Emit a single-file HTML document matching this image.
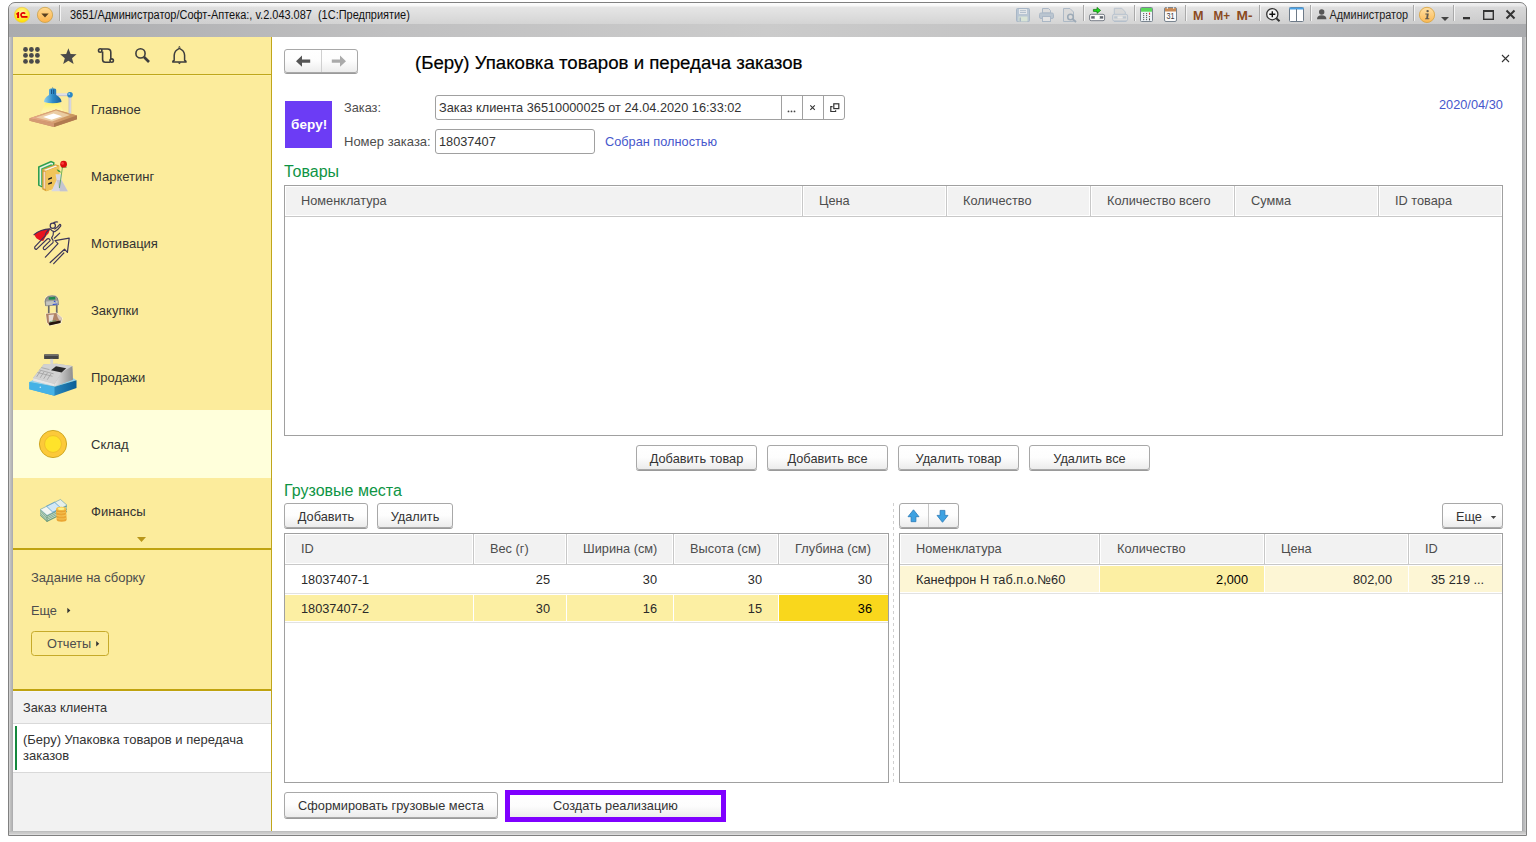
<!DOCTYPE html>
<html><head><meta charset="utf-8">
<style>
*{box-sizing:border-box;margin:0;padding:0}
html,body{width:1536px;height:842px;overflow:hidden;background:#fff}
body{position:relative;font-family:"Liberation Sans",sans-serif;font-size:12.75px;color:#333}
.a{position:absolute}
.t{position:absolute;white-space:nowrap;line-height:15px}
#frame{left:8px;top:2px;width:1519px;height:834px;border:1px solid #808080;border-radius:7px 7px 0 0;
 background:linear-gradient(to right,#d0d0d0 0,#d0d0d0 1px,#c0c0c0 1px,#c0c0c0 2px,#b8b8b8 2px,#b8b8b8 3px,#aeaeb0 3px,#aeaeb0 1513px,#a8a9ac 1513px,#a8a9ac 1514px,#b6b7b9 1514px,#b6b7b9 1515px,#bbbcbe 1515px,#bbbcbe 1516px,#cacaca 1516px)}
#tb1{left:9px;top:3px;width:1517px;height:21px;border-radius:6px 6px 0 0;background:linear-gradient(to right,rgba(120,120,125,0.12) 0,rgba(120,120,125,0) 25%,rgba(120,120,125,0) 75%,rgba(120,120,125,0.12) 100%),linear-gradient(#fdfdfd 0,#f8f8f8 3px,#e6e6e6 4px,#d4d4d4 21px)}
#tb2{left:9px;top:24px;width:1517px;height:13px;background:linear-gradient(to right,#aaabae 0,#c0c0c1 25%,#cbcbcb 50%,#c0c0c1 75%,#aaabae 100%)}
#bot{left:9px;top:831px;width:1517px;height:4px;background:linear-gradient(#bdbebe 0,#bdbebe 1px,#c8c8c8 1px,#c8c8c8 2px,#cdcdcd 2px,#cdcdcd 3px,#dcdcdc 3px)}
#side{left:13px;top:37px;width:259px;height:794px;background:#fcec9c;border-right:1px solid #bfa71b}
#main{left:272px;top:37px;width:1250px;height:794px;background:#fff}
.sec{position:absolute;left:0;width:258px;height:67px}
.sec .t{left:78px;top:26px;color:#333}
.sl{font-size:13px}
.btn{position:absolute;border:1px solid #a8a8a8;border-radius:3px;background:linear-gradient(#ffffff 0,#fdfdfd 50%,#ececec 100%);box-shadow:0 1px 0 #9a9a9a;color:#333;text-align:center;white-space:nowrap;line-height:25px}
.hdr{position:absolute;background:#f2f2f2;border-top:1px solid #fff;border-bottom:1px solid #fff}
.tbl{position:absolute;border:1px solid #a0a0a0;background:#fff}
.vl{position:absolute;width:1px;background:#d6d6d6}
.hl{position:absolute;height:1px;background:#d6d6d6}
</style></head><body>
<div id="frame" class="a"></div>
<div id="tb1" class="a"></div>
<div id="tb2" class="a"></div>
<div id="bot" class="a"></div>


<!-- TITLE BAR -->
<svg class="a" style="left:0;top:0" width="1536" height="37">
 <defs>
  <radialGradient id="g1c" cx="0.5" cy="0.35" r="0.6"><stop offset="0" stop-color="#fff7a8"/><stop offset="1" stop-color="#ffe100"/></radialGradient>
  <linearGradient id="gdd" x1="0" y1="0" x2="0" y2="1"><stop offset="0" stop-color="#ffdb94"/><stop offset="1" stop-color="#fdb24a"/></linearGradient>
  <linearGradient id="ginfo" x1="0" y1="0" x2="0" y2="1"><stop offset="0" stop-color="#ffe1a6"/><stop offset="1" stop-color="#fbb955"/></linearGradient>
 </defs>
 <circle cx="22" cy="14.9" r="7.6" fill="url(#g1c)" stroke="#e8c85a" stroke-width="0.8"/>
 <path d="M16 13.7 L18.1 12.1 L19.1 12.1 L19.1 17.9 L17.1 17.9 L17.1 14.4 L16.4 14.8 Z" fill="#e20000"/>
 <path d="M25.1 13.7 A2.25 2.1 0 1 0 22.3 16.8" fill="none" stroke="#e20000" stroke-width="1.7"/>
 <rect x="21.4" y="16" width="6.1" height="1.8" fill="#e20000"/>
 <circle cx="45" cy="14.9" r="7.6" fill="url(#gdd)" stroke="#c9a14a" stroke-width="0.8"/>
 <path d="M41.3 13.4 L48.7 13.4 L45 17.4 Z" fill="#5a4020"/>
 <rect x="59" y="5" width="1" height="16" fill="#a9a9a9"/>
 <rect x="60" y="5" width="1" height="16" fill="#f4f4f4"/>
 <!-- right icons -->
 <g opacity="0.85">
  <rect x="1016.5" y="8.5" width="13" height="13" rx="1" fill="#b3c2d2" stroke="#9fb0c2"/>
  <rect x="1019" y="9" width="8" height="5" fill="#e6e9ec"/>
  <rect x="1020" y="10.3" width="6" height="0.8" fill="#9fb0c2"/><rect x="1020" y="12.2" width="6" height="0.8" fill="#9fb0c2"/>
  <rect x="1018.5" y="16.5" width="9" height="5" fill="#d9e6d6"/>
  <rect x="1019.5" y="17.5" width="1.5" height="4" fill="#9fb0c2"/>
 </g>
 <g opacity="0.9">
  <path d="M1042.5 8.5 L1048.5 8.5 L1050.5 10.5 L1050.5 13 L1042.5 13 Z" fill="#dcdcdc" stroke="#a6b4c4"/>
  <rect x="1039.5" y="13" width="14" height="5.5" rx="1.5" fill="#b7c3cf" stroke="#a6b4c4"/>
  <rect x="1042.5" y="16.5" width="8" height="5" fill="#e4e4e4" stroke="#a6b4c4"/>
 </g>
 <g opacity="0.9">
  <path d="M1063.5 8.5 L1070 8.5 L1073.5 12 L1073.5 21.5 L1063.5 21.5 Z" fill="#dadada" stroke="#a9b6c4"/>
  <circle cx="1070.5" cy="17" r="2.8" fill="#dcdcdc" stroke="#97a6b4" stroke-width="1.6"/>
  <path d="M1072.5 19 L1076 22" stroke="#97a6b4" stroke-width="2"/>
 </g>
 <rect x="1083" y="5" width="1" height="16" fill="#a9a9a9"/><rect x="1084" y="5" width="1" height="16" fill="#f4f4f4"/>
 <g>
  <path d="M1093.4 9.4 L1097 9.4 L1097 7.4 L1100.6 10.4 L1097 13.4 L1097 11.4 L1093.4 11.4 Z" fill="#1fe01f" stroke="#0b6b0b" stroke-width="0.7" stroke-linejoin="round"/>
  <rect x="1089.6" y="14.3" width="15" height="6.4" rx="1.6" fill="#fafafa" stroke="#6b727c" stroke-width="0.9"/>
  <rect x="1091.2" y="16.2" width="3.6" height="2.4" fill="#5e646c"/>
  <rect x="1099.6" y="16.2" width="3.6" height="2.4" fill="#5e646c"/>
  <rect x="1094.8" y="16.6" width="4.8" height="1.4" fill="#fff"/>
 </g>
 <g opacity="0.75">
  <path d="M1114.3 8.3 L1121.8 8.3 L1125.3 12 L1125.3 14.5 L1114.3 14.5 Z" fill="#d6d6d6" stroke="#a9b8c8" stroke-width="0.9"/>
  <rect x="1112.6" y="14.3" width="15" height="6.6" rx="1.6" fill="#dcdcdc" stroke="#a9b8c8" stroke-width="0.9"/>
  <rect x="1114.2" y="16.3" width="3.4" height="2.2" fill="#b3c0cc"/>
  <rect x="1122.6" y="16.3" width="3.4" height="2.2" fill="#b3c0cc"/>
  <rect x="1117.6" y="16.7" width="5" height="1.3" fill="#eee"/>
  <rect x="1114" y="21" width="12.4" height="1" fill="#a9b8c8"/>
 </g>
 <rect x="1134" y="5" width="1" height="16" fill="#a9a9a9"/><rect x="1135" y="5" width="1" height="16" fill="#f4f4f4"/>
 <g>
  <rect x="1140.5" y="7.5" width="12" height="14" rx="1" fill="#eef3f7" stroke="#7a8590"/>
  <rect x="1141" y="8" width="11" height="3.7" fill="#5bd85b"/>
  <g fill="#444"><circle cx="1143.7" cy="13.6" r="0.6"/><circle cx="1146.6" cy="13.6" r="0.6"/><circle cx="1143.7" cy="15.6" r="0.6"/><circle cx="1146.6" cy="15.6" r="0.6"/><circle cx="1143.7" cy="17.6" r="0.6"/><circle cx="1146.6" cy="17.6" r="0.6"/><circle cx="1143.7" cy="19.6" r="0.6"/><circle cx="1146.6" cy="19.6" r="0.6"/><circle cx="1149.5" cy="16.6" r="0.6"/><rect x="1149" y="18.4" width="1" height="2"/></g>
  <rect x="1149" y="12.6" width="1.1" height="2.2" rx="0.4" fill="#f03030"/>
 </g>
 <g>
  <rect x="1164.5" y="7.5" width="12" height="14" rx="1.5" fill="#fafafa" stroke="#7a8590"/>
  <rect x="1165" y="8" width="11" height="3.5" fill="#c98a55"/>
  <rect x="1166.8" y="6.8" width="1" height="2.2" fill="#eee"/><rect x="1173.2" y="6.8" width="1" height="2.2" fill="#eee"/>
  <text x="1166.4" y="19.4" font-family="Liberation Sans" font-size="8.8" fill="#3a3a3a" textLength="8" lengthAdjust="spacingAndGlyphs">31</text>
 </g>
 <rect x="1185" y="5" width="1" height="16" fill="#a9a9a9"/><rect x="1186" y="5" width="1" height="16" fill="#f4f4f4"/>
 <g font-family="Liberation Sans" font-weight="bold" fill="#8b4b1f" font-size="13.5">
  <text x="1193" y="20.1" textLength="10.5" lengthAdjust="spacingAndGlyphs">M</text>
  <text x="1213.5" y="20.1" textLength="16.5" lengthAdjust="spacingAndGlyphs">M+</text>
  <text x="1236.5" y="20.1" textLength="16" lengthAdjust="spacingAndGlyphs">M-</text>
 </g>
 <rect x="1259" y="5" width="1" height="16" fill="#a9a9a9"/><rect x="1260" y="5" width="1" height="16" fill="#f4f4f4"/>
 <g>
  <circle cx="1272.3" cy="14.2" r="5.6" fill="#f4f4f4" stroke="#333" stroke-width="1.3"/>
  <path d="M1269.3 14.2 H1275.3 M1272.3 11.2 V17.2" stroke="#111" stroke-width="1.4"/>
  <path d="M1276.3 18.2 L1279.5 21.3" stroke="#333" stroke-width="2"/>
 </g>
 <g>
  <rect x="1289.5" y="7.5" width="14" height="14" rx="1" fill="#fff" stroke="#6d7a88"/>
  <rect x="1289.5" y="7.5" width="14" height="2" fill="#4aa3e8"/>
  <rect x="1296" y="9" width="1" height="12" fill="#6d7a88"/>
 </g>
 <rect x="1310" y="5" width="1" height="16" fill="#a9a9a9"/><rect x="1311" y="5" width="1" height="16" fill="#f4f4f4"/>
 <g fill="#555">
  <circle cx="1321.7" cy="12" r="2.7"/>
  <path d="M1317 19.2 Q1317 15.2 1321.7 15.2 Q1326.4 15.2 1326.4 19.2 Z"/>
 </g>
 <text x="1329.5" y="19.3" font-family="Liberation Sans" font-size="12" fill="#222" textLength="78.5" lengthAdjust="spacingAndGlyphs">Администратор</text>
 <rect x="1413" y="5" width="1" height="16" fill="#a9a9a9"/><rect x="1414" y="5" width="1" height="16" fill="#f4f4f4"/>
 <circle cx="1427" cy="14.9" r="7.6" fill="url(#ginfo)" stroke="#d9a646" stroke-width="0.9"/>
 <circle cx="1427.6" cy="11.1" r="1.2" fill="#5f5a50"/>
 <path d="M1425.4 13.4 L1428.8 13.4 L1428 18.2 L1429.4 18.2 L1429.2 19.2 L1425 19.2 L1425.2 18.2 L1426.2 18.2 L1426.7 14.4 L1425.2 14.4 Z" fill="#5f5a50"/>
 <path d="M1441 17 L1449 17 L1445 21 Z" fill="#444"/>
 <rect x="1453" y="5" width="1" height="16" fill="#a9a9a9"/><rect x="1454" y="5" width="1" height="16" fill="#f4f4f4"/>
 <rect x="1463" y="17" width="7" height="2.3" fill="#333"/>
 <rect x="1483.7" y="10.7" width="9.6" height="8.6" fill="none" stroke="#333" stroke-width="1.4"/>
 <rect x="1483" y="10" width="11" height="2" fill="#333"/>
 <path d="M1506.5 10.5 L1514.5 18.5 M1514.5 10.5 L1506.5 18.5" stroke="#333" stroke-width="2"/>
</svg>
<div class="t" style="left:70px;top:8px;font-size:12px;line-height:14px;color:#111;transform:scaleX(0.913);transform-origin:0 0">3651/Администратор/Софт-Аптека:, v.2.043.087&nbsp; (1С:Предприятие)</div>

<!-- SIDEBAR -->
<div id="side" class="a"></div>
<svg class="a" style="left:0;top:0" width="272" height="842">
 <defs>
  <linearGradient id="shade" x1="0" y1="0" x2="1" y2="0"><stop offset="0" stop-color="#8fd0ef"/><stop offset="0.5" stop-color="#2f8cc8"/><stop offset="1" stop-color="#1a5f99"/></linearGradient>
  <linearGradient id="cone" x1="0" y1="0" x2="0" y2="1"><stop offset="0" stop-color="#fff36a"/><stop offset="1" stop-color="#fff7c0" stop-opacity="0.6"/></linearGradient>
  <linearGradient id="wood" x1="0" y1="0" x2="1" y2="0"><stop offset="0" stop-color="#e6a98a"/><stop offset="1" stop-color="#c8955a"/></linearGradient>
  <linearGradient id="drawer" x1="0" y1="0" x2="1" y2="0"><stop offset="0" stop-color="#4cb8ec"/><stop offset="1" stop-color="#0b5e96"/></linearGradient>
  <linearGradient id="reg" x1="0" y1="0" x2="1" y2="0"><stop offset="0" stop-color="#e4e4e4"/><stop offset="1" stop-color="#8d8d8d"/></linearGradient>
 </defs>
 <!-- toolbar line -->
 <rect x="13" y="74" width="258" height="1" fill="#bfa71b"/>
 <rect x="13" y="75" width="258" height="1" fill="#fdf0a8"/>
 <!-- toolbar icons -->
 <g fill="#4a4a4a">
  <circle cx="25.5" cy="49.5" r="2.4"/><circle cx="31.4" cy="49.5" r="2.4"/><circle cx="37.4" cy="49.5" r="2.4"/>
  <circle cx="25.5" cy="55.4" r="2.4"/><circle cx="31.4" cy="55.4" r="2.4"/><circle cx="37.4" cy="55.4" r="2.4"/>
  <circle cx="25.5" cy="61.4" r="2.4"/><circle cx="31.4" cy="61.4" r="2.4"/><circle cx="37.4" cy="61.4" r="2.4"/>
  <path d="M68.4 48.3 L70.6 53.9 L76.6 54.3 L72 58.2 L73.6 63.9 L68.4 60.7 L63.2 63.9 L64.8 58.2 L60.2 54.3 L66.2 53.9 Z"/>
 </g>
 <g fill="none" stroke="#3d3d3d" stroke-width="1.6">
  <path d="M101.4 49 H107.5 Q110.8 49 110.8 52.3 V59.5"/>
  <path d="M102.6 51.5 V59.6 Q102.6 62.3 105.3 62.3 H110.3"/>
  <circle cx="100.2" cy="50.5" r="1.7"/>
  <circle cx="111.7" cy="60.6" r="1.7"/>
  <circle cx="140.5" cy="53.4" r="4.6"/>
 </g>
 <path d="M144 57 L149 62" stroke="#3d3d3d" stroke-width="2.6"/>
 <path d="M179.4 48.4 Q174.4 50.6 174.2 55.4 V60.2 Q172.7 60.8 172.7 62 H186.1 Q186.1 60.8 184.6 60.2 V55.4 Q184.4 50.6 179.4 48.4 Z" fill="none" stroke="#3d3d3d" stroke-width="1.5" stroke-linejoin="round"/>
 <path d="M177.9 47.6 L180.9 47.6 L179.4 46 Z" fill="#3d3d3d"/>
 <path d="M177.6 62.6 L181.2 62.6 L179.4 64.3 Z" fill="#3d3d3d"/>

 <!-- highlighted section -->
 <rect x="13" y="410" width="258" height="68" fill="#ffffdb"/>

 <!-- Главное lamp -->
 <path d="M45.5 103 L59.5 103 L64 112.5 L41 112.5 Z" fill="url(#cone)"/>
 <path d="M29.5 118.2 L56 109.4 L77 115.4 L77 119.2 L54 127 L29.5 120.8 Z" fill="#c99060"/>
 <path d="M29.5 118.2 L56 109.4 L77 115.4 L54 123.6 Z" fill="url(#wood)"/>
 <path d="M36 117.4 L56 110.6 L70 115 L52 121.6 Z" fill="#f0d8b0" opacity="0.8"/>
 <path d="M43 117 L53.5 113.4 L62 116.2 L51.6 119.8 Z" fill="#ffffff"/>
 <path d="M29.5 118.2 L54 123.6 L54 127 L29.5 120.8 Z" fill="#d49a74"/>
 <path d="M54 123.6 L77 115.4 L77 119.2 L54 127 Z" fill="#b07a50"/>
 <rect x="68.6" y="96" width="2.6" height="17.4" fill="#bcbcc8"/>
 <rect x="69.6" y="96" width="1" height="17.4" fill="#e8e8f0"/>
 <rect x="56" y="93.4" width="13" height="2.8" fill="#c8c8d4"/>
 <rect x="56" y="93.6" width="13" height="1" fill="#eeeef4"/>
 <circle cx="70" cy="94.8" r="2.8" fill="#2a86c4"/>
 <circle cx="69.2" cy="94" r="1" fill="#8fcaf0"/>
 <path d="M49 90 Q49 88.2 52.8 88.2 Q56.2 88.2 56.2 90 L56.2 95 Q61.5 97.8 61.5 102 Q52.5 104.6 44 102 Q44 97.8 49 95 Z" fill="url(#shade)"/>
 <rect x="51" y="89.5" width="0.9" height="4.5" fill="#1a4f80"/>
 <rect x="53.2" y="89.5" width="0.9" height="4.5" fill="#1a4f80"/>
 <path d="M52.4 88.2 L52.8 86.8 L53.2 88.2 Z" fill="#1a5f99"/>

 <!-- Маркетинг -->
 <path d="M38 166.5 L51 160.8 L54.5 162.2 L54.5 182.5 L42 187.5 L38 185.5 Z" fill="#2f9e4f"/>
 <path d="M39.6 167.4 L51 162.4 L53 163.2 L53 181.5 L42 186 L39.6 185 Z" fill="#e9f3e6"/>
 <path d="M41.2 168.4 L51 164.2 L53 164.8 L53 181.5 L42.6 186 L41.2 185.4 Z" fill="#3dae5c"/>
 <path d="M42.2 169.2 L55.5 164.2 L59.2 165.5 L59.2 186.5 L46 191.2 L42.2 189.2 Z" fill="#d9a23a"/>
 <path d="M43.4 170 L55.5 165.5 L57.6 166.3 L46 170.8 Z" fill="#f6f2e6"/>
 <path d="M46 171 L59.2 166 L59.2 186.5 L46 191.2 Z" fill="#f0c45a"/>
 <path d="M43.6 172 L45.4 171.4 L45.4 189 L43.6 188.2 Z" fill="#f4d8c0"/>
 <path d="M48.2 178.4 L52 177 L52 178.6 L48.2 180 Z M48.2 183.2 L52 181.8 L52 183.4 L48.2 184.8 Z" fill="#222"/>
 <path d="M55.5 174.2 L61.8 174.2 L61.4 180 L67.8 191.2 L51.4 191.2 L56.6 180 Z" fill="#d8d8e2"/>
 <path d="M56.6 180 L61.4 180 L67.8 191.2 L60 191.2 Z" fill="#c4c4d0"/>
 <path d="M62.5 167 L59.4 188" stroke="#3a9a3a" stroke-width="0.7"/>
 <path d="M56.6 169.2 Q59.6 169.6 61.2 172.4 Q58.2 172.4 56.6 169.2 Z" fill="#2f9a3a"/>
 <path d="M61.6 167.6 Q64 166.6 66.6 167.2" stroke="#2f9a3a" stroke-width="0.9" fill="none"/>
 <circle cx="63.6" cy="164.2" r="3.4" fill="#d90e0e"/>
 <circle cx="62.6" cy="163.4" r="1.4" fill="#ff3a3a"/>

 <!-- Мотивация -->
 <path d="M34 234.6 Q40.5 229.2 50 228.8 L48.6 233.2 Q45.2 235.8 43.2 241 Q38.6 240.4 36.4 238.2 Z" fill="#e8141e"/>
 <g fill="none" stroke="#3b3558" stroke-width="1.2" stroke-linejoin="round" stroke-linecap="round">
  <circle cx="52.8" cy="225.8" r="2.6"/>
  <path d="M53.8 222.6 Q55.8 221.6 57.6 222"/>
  <path d="M34 234.6 Q40.5 229.2 50 228.8"/>
  <path d="M50.6 229.4 Q52.6 232 55 231.6 Q58.2 229.6 60.6 226.2 Q61.2 224.6 59.8 224.4 Q57.6 227.4 54.8 229"/>
  <path d="M49 229.8 Q45.6 232.2 45.2 235.8 L34.8 246.8 Q34.2 249.2 36.4 249.4 L47.4 238.8 Q49.8 238.2 50.2 240.6 L43.4 247.4 Q42.8 249.8 45.2 249.6 L53 242.6 Q53.8 240.4 51.6 238 Q53.8 235.4 53.4 231.6"/>
  <path d="M45.4 257.2 L58 243.6 L55 240.6 L69.2 238.2 L67.4 252.4 L64.5 249.2 L50.2 262.5"/>
  <path d="M53.7 263.7 L63.8 253"/>
  <path d="M54.3 238.2 L59.7 233.1"/>
 </g>

 <!-- Закупки -->
 <path d="M44.2 301 Q45 296.6 48 295.6 Q51.5 294.4 55.5 295.4 Q58.4 296.4 58.8 300.5 L59 305.6 L45 306.4 Z" fill="#fff" opacity="0.6"/>
 <path d="M45 301.2 Q45.6 297.3 48.3 296.3 Q51.5 295.2 55.3 296.1 Q57.9 297 58.2 300.8 L58.4 305 L45.6 305.8 Z" fill="#9c9c98" stroke="#5c5c5a" stroke-width="0.6"/>
 <path d="M48.6 297.2 L55.2 296.8 L55.4 299.4 L48.8 299.8 Z" fill="#1f8a4c"/>
 <path d="M46 301.6 L57.6 300.8 L57.7 304.8 L46.3 305.4 Z" fill="#c4c4c0"/>
 <path d="M53.4 301.6 L55 300.6 L55.8 302.4 Z M52.6 304 L57.4 303.4 L57.4 304.6 L52.8 305 Z" fill="#2a4bd0"/>
 <rect x="47.9" y="305.6" width="1.7" height="8" fill="#6a6a6a"/>
 <rect x="55.9" y="305.2" width="1.7" height="8" fill="#6a6a6a"/>
 <path d="M45.4 313.4 L56.6 312.4 L62.8 318 L61.2 323.4 L49.2 326 L46.6 322.6 Z" fill="#fff" opacity="0.7"/>
 <path d="M46 313.8 L56.4 313 L62 318.2 L60.6 322.8 L49.4 325.2 L47 322.2 Z" fill="#b08366"/>
 <path d="M48.6 315 L54 314.4 L52.2 322 L49 323 Z" fill="#e9ddd4"/>
 <path d="M56.4 313 L62 318.2 L60.6 322.8 L57.6 317.2 Z" fill="#d8c8bc"/>
 <path d="M49 322.6 L60.8 320.4 L60.4 322.9 L49.4 325.4 Z" fill="#24160e"/>
 <path d="M49.6 321.6 L56 320.6" stroke="#3a9a5a" stroke-width="0.6"/>

 <!-- Продажи -->
 <rect x="44.1" y="354.2" width="14.6" height="4.7" rx="0.5" fill="#454545"/>
 <rect x="44.6" y="354.6" width="13.6" height="1.2" fill="#777"/>
 <rect x="50.3" y="358.9" width="2.8" height="5" fill="#d6d6d6"/>
 <path d="M29.3 382.1 L34 379.6 L72.5 377.8 L76.5 380.3 L54.5 386.8 Z" fill="#8fd3f2"/>
 <path d="M33.1 377.9 L43.8 364.3 L56.9 363.7 L72.3 366 L72.9 379.7 L54.5 386.2 L33.1 380.9 Z" fill="#b4b4b4"/>
 <path d="M54.5 384 L61.6 372.6 L72.3 366 L72.9 379.7 L54.5 386.2 Z" fill="url(#reg)"/>
 <path d="M33.1 377.9 L43.8 364.3 L56.9 363.7 L72.3 366 L61.6 372.6 L54.5 384 Z" fill="#d2d2d2"/>
 <path d="M33.1 377.9 L54.5 384 L54.5 386.2 L33.1 380.9 Z" fill="#e6e6e6"/>
 <path d="M51 370.2 L56 366.2 L66.2 368.2 L61.6 372.6 Z" fill="#2a2a2a"/>
 <g stroke="#9a9a9a" stroke-width="0.7">
  <path d="M37.5 372.5 L52.5 376.3 M39.4 370 L53.6 373.8 M41.3 367.6 L49.5 369.6"/>
  <path d="M40.5 370.8 L36.7 376.8 M44 371.8 L40.2 377.8 M47.5 372.8 L43.7 378.8 M51 373.8 L47.2 379.8"/>
 </g>
 <path d="M29.3 382.1 L54.5 386.8 L76.5 380.3 L76.5 388 L54.5 395.8 L29.3 389.2 Z" fill="url(#drawer)"/>
 <path d="M29.3 382.1 L54.5 386.8 L54.5 395.8 L29.3 389.2 Z" fill="#45b2e6"/>
 <circle cx="40.3" cy="387.2" r="0.8" fill="#cfe8f6"/>

 <!-- Склад -->
 <circle cx="53" cy="444" r="13.6" fill="#fcc93a" stroke="#c9a21c" stroke-width="0.9"/>
 <circle cx="53" cy="444" r="8.4" fill="#ffe32a" stroke="#e9b428" stroke-width="0.7"/>

 <!-- Финансы -->
 <path d="M40.2 509.4 L60.5 499.4 L67 505.2 L67 512 L47 522 L40.2 515.8 Z" fill="#6f9f7e"/>
 <g stroke="#e4efe4" stroke-width="0.7" fill="none">
  <path d="M40.4 511 L47 517 L67 507"/><path d="M40.4 512.6 L47 518.6 L67 508.6"/><path d="M40.4 514.2 L47 520.2 L67 510.2"/>
 </g>
 <path d="M47 515.6 L47 522" stroke="#5c8c6c" stroke-width="0.6"/>
 <path d="M40.2 509.4 L60.5 499.4 L67 505.2 L47 515.4 Z" fill="#e6efe8"/>
 <path d="M46.5 506.2 L54.6 502.2 L61 508.2 L52.8 512.2 Z" fill="#d2e8f6" stroke="#4a98cc" stroke-width="0.7"/>
 <path d="M41.8 509.6 L46.6 507.2 L52.2 512.4 L47.2 514.8 Z" fill="#f4f6f2"/>
 <path d="M40.2 509.4 L60.5 499.4 L67 505.2 L47 515.4 Z" fill="none" stroke="#6aa0b8" stroke-width="0.5"/>
 <g>
  <path d="M56.6 519.5 A5 2.2 0 0 0 66.6 519.5 V517.5 H56.6 Z" fill="#eaa532"/>
  <ellipse cx="61.6" cy="517.5" rx="5" ry="2.1" fill="#f6c454"/>
  <path d="M56.4 516.4 A5 2.2 0 0 0 66.4 516.4 V514.4 H56.4 Z" fill="#eaa532"/>
  <ellipse cx="61.4" cy="514.4" rx="5" ry="2.1" fill="#f6c454"/>
  <path d="M56.2 513.3 A5 2.2 0 0 0 66.2 513.3 V511.3 H56.2 Z" fill="#eaa532"/>
  <ellipse cx="61.2" cy="511.3" rx="5" ry="2.1" fill="#f6c454"/>
  <path d="M56.2 510.2 A5 2.2 0 0 0 66.2 510.2 V508.8 H56.2 Z" fill="#e9a230"/>
  <ellipse cx="61.2" cy="508.8" rx="5" ry="2" fill="#f3c248"/>
  <ellipse cx="61.2" cy="508.8" rx="3.2" ry="1.2" fill="#fff38a"/>
 </g>

 <!-- down arrow + line -->
 <path d="M137 537 L146 537 L141.5 542 Z" fill="#b8961a"/>
 <rect x="13" y="548" width="258" height="2" fill="#bfa30f"/>
 <!-- Еще arrow -->
 <path d="M67.3 607.8 L70.4 610.5 L67.3 613.2 Z" fill="#333"/>
 <!-- Отчеты button -->
 <rect x="31.5" y="631.5" width="77" height="24" rx="3" fill="none" stroke="#c6aa2a"/>
 <path d="M96.2 641 L99.2 643.7 L96.2 646.4 Z" fill="#333"/>
 <rect x="13" y="689" width="258" height="2" fill="#bfa30f"/>
 <rect x="13" y="691" width="258" height="140" fill="#f2f2f2"/>
 <rect x="13" y="691" width="258" height="1" fill="#f6f6fa"/>
 <rect x="13" y="723" width="258" height="1" fill="#d9d9d9"/>
 <rect x="13" y="724" width="258" height="48" fill="#fff"/>
 <rect x="13" y="772" width="258" height="1" fill="#d9d9d9"/>
 <rect x="15" y="726" width="2" height="44" fill="#14893c"/>
 <rect x="271" y="37" width="1" height="794" fill="#c0a61a"/>
</svg>
<div class="t sl" style="left:91px;top:102px">Главное</div>
<div class="t sl" style="left:91px;top:169px">Маркетинг</div>
<div class="t sl" style="left:91px;top:236px">Мотивация</div>
<div class="t sl" style="left:91px;top:303px">Закупки</div>
<div class="t sl" style="left:91px;top:370px">Продажи</div>
<div class="t sl" style="left:91px;top:437px">Склад</div>
<div class="t sl" style="left:91px;top:504px">Финансы</div>
<div class="t" style="left:31px;top:570px;color:#4d4d4d;font-size:13px">Задание на сборку</div>
<div class="t" style="left:31px;top:603px;color:#4d4d4d">Еще</div>
<div class="t" style="left:47px;top:636px;color:#4d4d4d">Отчеты</div>
<div class="t" style="left:23px;top:700px">Заказ клиента</div>
<div class="t" style="left:23px;top:732px;line-height:16px;font-size:13px">(Беру) Упаковка товаров и передача<br>заказов</div>


<!-- MAIN -->
<div id="main" class="a"></div>
<!-- nav buttons -->
<div class="btn" style="left:284px;top:49px;width:74px;height:24px"></div>
<div class="a" style="left:321px;top:50px;width:1px;height:22px;background:#d0d0d0"></div>
<svg class="a" style="left:280px;top:44px" width="90" height="35">
 <path d="M16 17.2 L22 11.6 L22 15.6 L30.2 15.6 L30.2 18.8 L22 18.8 L22 22.8 Z" fill="#555"/>
 <path d="M66 17.2 L60 11.6 L60 15.6 L51.8 15.6 L51.8 18.8 L60 18.8 L60 22.8 Z" fill="#aaa"/>
</svg>
<div class="t" style="left:415px;top:52px;font-size:18.67px;line-height:21px;color:#000;-webkit-text-stroke:0.2px #000">(Беру) Упаковка товаров и передача заказов</div>
<svg class="a" style="left:1500px;top:53px" width="12" height="12"><path d="M2 2 L9 9 M9 2 L2 9" stroke="#333" stroke-width="1.1"/></svg>
<!-- logo -->
<div class="a" style="left:285px;top:101px;width:47px;height:47px;background:#6c3cf5"></div>
<div class="t" style="left:291px;top:117px;font-size:13.5px;font-weight:bold;color:#fff;letter-spacing:0.1px">беру!</div>
<div class="t" style="left:344px;top:100px;color:#4d4d4d">Заказ:</div>
<div class="t" style="left:344px;top:134px;color:#4d4d4d;font-size:13px">Номер заказа:</div>
<!-- input 1 -->
<div class="a" style="left:435px;top:95px;width:410px;height:25px;border:1px solid #a0a0a0;border-radius:3px;background:#fff"></div>
<div class="a" style="left:781px;top:96px;width:1px;height:23px;background:#a0a0a0"></div>
<div class="a" style="left:802px;top:96px;width:1px;height:23px;background:#a0a0a0"></div>
<div class="a" style="left:823px;top:96px;width:1px;height:23px;background:#a0a0a0"></div>
<svg class="a" style="left:782px;top:96px" width="62" height="23">
 <circle cx="6.5" cy="15.4" r="0.9" fill="#444"/><circle cx="9.5" cy="15.4" r="0.9" fill="#444"/><circle cx="12.5" cy="15.4" r="0.9" fill="#444"/>
 <path d="M28.3 9.3 L32.8 13.8 M32.8 9.3 L28.3 13.8" stroke="#333" stroke-width="1.1"/>
 <rect x="51.8" y="7.8" width="5" height="4.8" fill="none" stroke="#333" stroke-width="1.2"/>
 <path d="M50.6 10.6 H48.8 V15.5 H53.6 V14.2" fill="none" stroke="#333" stroke-width="1.2"/>
</svg>
<div class="t" style="left:439px;top:100px;color:#333">Заказ клиента 36510000025 от 24.04.2020 16:33:02</div>
<!-- input 2 -->
<div class="a" style="left:435px;top:129px;width:160px;height:25px;border:1px solid #a0a0a0;border-radius:3px;background:#fff"></div>
<div class="t" style="left:439px;top:134px;color:#333">18037407</div>
<div class="t" style="left:605px;top:134px;color:#4657cc">Собран полностью</div>
<div class="t" style="left:1439px;top:97px;color:#4657cc">2020/04/30</div>
<div class="t" style="left:284px;top:163px;font-size:16px;line-height:18px;color:#0e9444">Товары</div>
<div class="t" style="left:284px;top:482px;font-size:16px;line-height:18px;color:#0e9444">Грузовые места</div>

<!-- TABLES -->
<div class="a" style="left:284px;top:185px;width:1219px;height:251px;border:1px solid #a0a0a0;background:#fff"></div>
<div class="a" style="left:285px;top:186px;width:517px;height:30px;border:1px solid #fff;background:#f2f2f2"></div>
<div class="a" style="left:803px;top:186px;width:143px;height:30px;border:1px solid #fff;background:#f2f2f2"></div>
<div class="a" style="left:947px;top:186px;width:143px;height:30px;border:1px solid #fff;background:#f2f2f2"></div>
<div class="a" style="left:1091px;top:186px;width:143px;height:30px;border:1px solid #fff;background:#f2f2f2"></div>
<div class="a" style="left:1235px;top:186px;width:143px;height:30px;border:1px solid #fff;background:#f2f2f2"></div>
<div class="a" style="left:1379px;top:186px;width:123px;height:30px;border:1px solid #fff;background:#f2f2f2"></div>
<div class="a" style="left:802px;top:186px;width:1px;height:30px;background:#c8c8c8"></div>
<div class="a" style="left:946px;top:186px;width:1px;height:30px;background:#c8c8c8"></div>
<div class="a" style="left:1090px;top:186px;width:1px;height:30px;background:#c8c8c8"></div>
<div class="a" style="left:1234px;top:186px;width:1px;height:30px;background:#c8c8c8"></div>
<div class="a" style="left:1378px;top:186px;width:1px;height:30px;background:#c8c8c8"></div>
<div class="a" style="left:285px;top:216px;width:1217px;height:1px;background:#c8c8c8"></div>
<div class="t" style="left:301px;top:193px;color:#4d4d4d">Номенклатура</div>
<div class="t" style="left:819px;top:193px;color:#4d4d4d">Цена</div>
<div class="t" style="left:963px;top:193px;color:#4d4d4d">Количество</div>
<div class="t" style="left:1107px;top:193px;color:#4d4d4d">Количество всего</div>
<div class="t" style="left:1251px;top:193px;color:#4d4d4d">Сумма</div>
<div class="t" style="left:1395px;top:193px;color:#4d4d4d">ID товара</div>
<div class="a" style="left:284px;top:533px;width:605px;height:250px;border:1px solid #a0a0a0;background:#fff"></div>
<div class="a" style="left:285px;top:534px;width:188px;height:30px;border:1px solid #fff;background:#f2f2f2"></div>
<div class="a" style="left:474px;top:534px;width:92px;height:30px;border:1px solid #fff;background:#f2f2f2"></div>
<div class="a" style="left:567px;top:534px;width:106px;height:30px;border:1px solid #fff;background:#f2f2f2"></div>
<div class="a" style="left:674px;top:534px;width:104px;height:30px;border:1px solid #fff;background:#f2f2f2"></div>
<div class="a" style="left:779px;top:534px;width:109px;height:30px;border:1px solid #fff;background:#f2f2f2"></div>
<div class="a" style="left:473px;top:534px;width:1px;height:30px;background:#c8c8c8"></div>
<div class="a" style="left:566px;top:534px;width:1px;height:30px;background:#c8c8c8"></div>
<div class="a" style="left:673px;top:534px;width:1px;height:30px;background:#c8c8c8"></div>
<div class="a" style="left:778px;top:534px;width:1px;height:30px;background:#c8c8c8"></div>
<div class="a" style="left:285px;top:564px;width:603px;height:1px;background:#c8c8c8"></div>
<div class="t" style="left:301px;top:541px;color:#4d4d4d">ID</div>
<div class="t" style="left:490px;top:541px;color:#4d4d4d">Вес (г)</div>
<div class="t" style="left:583px;top:541px;color:#4d4d4d">Ширина (см)</div>
<div class="t" style="left:690px;top:541px;color:#4d4d4d">Высота (см)</div>
<div class="t" style="left:795px;top:541px;color:#4d4d4d">Глубина (см)</div>
<div class="a" style="left:285px;top:593px;width:603px;height:1px;background:#e2e2e2"></div>
<div class="t" style="left:301px;top:572px;color:#2a2a2a">18037407-1</div>
<div class="t" style="right:986px;top:572px;color:#2a2a2a">25</div>
<div class="t" style="right:879px;top:572px;color:#2a2a2a">30</div>
<div class="t" style="right:774px;top:572px;color:#2a2a2a">30</div>
<div class="t" style="right:664px;top:572px;color:#2a2a2a">30</div>
<div class="a" style="left:285px;top:595px;width:188px;height:26px;background:#fcefa3"></div>
<div class="a" style="left:474px;top:595px;width:92px;height:26px;background:#fcefa3"></div>
<div class="a" style="left:567px;top:595px;width:106px;height:26px;background:#fcefa3"></div>
<div class="a" style="left:674px;top:595px;width:104px;height:26px;background:#fcefa3"></div>
<div class="a" style="left:779px;top:595px;width:109px;height:26px;background:#f9d71c"></div>
<div class="a" style="left:285px;top:622px;width:603px;height:1px;background:#e2e2e2"></div>
<div class="t" style="left:301px;top:601px;color:#2a2a2a">18037407-2</div>
<div class="t" style="right:986px;top:601px;color:#2a2a2a">30</div>
<div class="t" style="right:879px;top:601px;color:#2a2a2a">16</div>
<div class="t" style="right:774px;top:601px;color:#2a2a2a">15</div>
<div class="t" style="right:664px;top:601px;color:#000">36</div>
<div class="a" style="left:899px;top:533px;width:604px;height:250px;border:1px solid #a0a0a0;background:#fff"></div>
<div class="a" style="left:900px;top:534px;width:199px;height:30px;border:1px solid #fff;background:#f2f2f2"></div>
<div class="a" style="left:1100px;top:534px;width:164px;height:30px;border:1px solid #fff;background:#f2f2f2"></div>
<div class="a" style="left:1265px;top:534px;width:143px;height:30px;border:1px solid #fff;background:#f2f2f2"></div>
<div class="a" style="left:1409px;top:534px;width:93px;height:30px;border:1px solid #fff;background:#f2f2f2"></div>
<div class="a" style="left:1099px;top:534px;width:1px;height:30px;background:#c8c8c8"></div>
<div class="a" style="left:1264px;top:534px;width:1px;height:30px;background:#c8c8c8"></div>
<div class="a" style="left:1408px;top:534px;width:1px;height:30px;background:#c8c8c8"></div>
<div class="a" style="left:900px;top:564px;width:602px;height:1px;background:#c8c8c8"></div>
<div class="t" style="left:916px;top:541px;color:#4d4d4d">Номенклатура</div>
<div class="t" style="left:1117px;top:541px;color:#4d4d4d">Количество</div>
<div class="t" style="left:1281px;top:541px;color:#4d4d4d">Цена</div>
<div class="t" style="left:1425px;top:541px;color:#4d4d4d">ID</div>
<div class="a" style="left:900px;top:566px;width:199px;height:26px;background:#fdf6d5"></div>
<div class="a" style="left:1100px;top:566px;width:164px;height:26px;background:#fcefa3"></div>
<div class="a" style="left:1265px;top:566px;width:143px;height:26px;background:#fdf6d5"></div>
<div class="a" style="left:1409px;top:566px;width:93px;height:26px;background:#fdf6d5"></div>
<div class="a" style="left:900px;top:593px;width:602px;height:1px;background:#e2e2e2"></div>
<div class="t" style="left:916px;top:572px;color:#2a2a2a">Канефрон Н таб.п.о.№60</div>
<div class="t" style="right:288px;top:572px;color:#000">2,000</div>
<div class="t" style="right:144px;top:572px;color:#2a2a2a">802,00</div>
<div class="t" style="left:1431px;top:572px;color:#2a2a2a">35 219 ...</div>
<!-- /TABLES -->
<!-- BUTTONS -->
<div class="btn" style="left:636px;top:445px;width:121px;height:25px">Добавить товар</div>
<div class="btn" style="left:767px;top:445px;width:121px;height:25px">Добавить все</div>
<div class="btn" style="left:898px;top:445px;width:121px;height:25px">Удалить товар</div>
<div class="btn" style="left:1029px;top:445px;width:121px;height:25px">Удалить все</div>
<div class="btn" style="left:284px;top:503px;width:84px;height:25px">Добавить</div>
<div class="btn" style="left:377px;top:503px;width:76px;height:25px">Удалить</div>
<div class="btn" style="left:899px;top:503px;width:60px;height:25px"></div>
<div class="a" style="left:928px;top:504px;width:1px;height:23px;background:#c8c8c8"></div>
<svg class="a" style="left:899px;top:503px" width="60" height="26">
 <path d="M14.5 6.8 L20 13.7 L16.9 13.7 L16.9 18.7 L12.1 18.7 L12.1 13.7 L9 13.7 Z" fill="#3ea2e2" stroke="#2a7ab8" stroke-width="0.8"/>
 <path d="M43.5 19.3 L49 12.4 L45.9 12.4 L45.9 7.4 L41.1 7.4 L41.1 12.4 L38 12.4 Z" fill="#3ea2e2" stroke="#2a7ab8" stroke-width="0.8"/>
</svg>
<div class="btn" style="left:1442px;top:503px;width:61px;height:25px;text-align:left;padding-left:13px">Еще</div>
<svg class="a" style="left:1490px;top:514px" width="9" height="7"><path d="M0.8 2 L6.2 2 L3.5 5 Z" fill="#444"/></svg>
<div class="a" style="left:893px;top:503px;width:1px;height:280px;background:repeating-linear-gradient(#d0d0d0 0,#d0d0d0 3px,transparent 3px,transparent 6px)"></div>
<div class="btn" style="left:284px;top:792px;width:214px;height:26px;line-height:25px">Сформировать грузовые места</div>
<div class="a" style="left:505px;top:790px;width:221px;height:32px;border:5px solid #7f00ff"></div>
<div class="a" style="left:510px;top:795px;width:211px;height:22px;background:linear-gradient(#fff 0,#fdfdfd 50%,#ededed 100%)"></div>
<div class="t" style="left:510px;top:798px;width:211px;text-align:center;color:#333">Создать реализацию</div>
<!-- /BUTTONS -->
</body></html>
